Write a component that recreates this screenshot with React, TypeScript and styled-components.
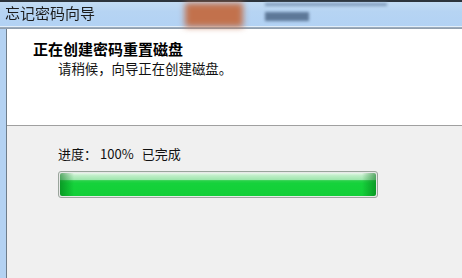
import React from "react";
import styled, { createGlobalStyle } from "styled-components";

const GlobalStyle = createGlobalStyle`
  html, body {
    margin: 0;
    padding: 0;
    overflow: hidden;
    background: #f0f0f0;
  }
`;

const cjk = `"Noto Sans CJK SC", "Microsoft YaHei", "Liberation Sans", sans-serif`;

const Window = styled.div`
  width: 462px;
  height: 278px;
  display: flex;
  flex-direction: column;
  font-family: ${cjk};
  overflow: hidden;
`;

const TopEdge = styled.div`
  height: 2px;
  background: #2c343c;
`;

const TitleBar = styled.div`
  height: 24px;
  display: flex;
  align-items: center;
  background: linear-gradient(to bottom, #c3dcf4 0%, #b6d4f3 40%, #b2d2f4 100%);
  border-bottom: 1px solid #e2eef9;
`;

const TitleText = styled.span`
  font-size: 15px;
  line-height: 15px;
  color: #1c1c1c;
  margin-left: 5px;
  margin-top: -4px;
  width: 180px;
  filter: blur(0.3px);
`;

const GlassBlob = styled.div`
  width: 58px;
  height: 24px;
  margin-top: 1px;
  background: #c2714c;
  filter: blur(3px);
`;

const GlassText = styled.div`
  display: flex;
  flex-direction: column;
  gap: 6px;
  margin-left: 22px;
  margin-top: -4px;
`;

const GlassLine = styled.div<{ $w: number; $c: string; $h: number }>`
  width: ${(p) => p.$w}px;
  height: ${(p) => p.$h}px;
  background: ${(p) => p.$c};
  filter: blur(1.5px);
`;

const FrameRule = styled.div`
  height: 2px;
  background: linear-gradient(to bottom, #9eb0c2, #8d9aa8);
`;

const Body = styled.div`
  flex: 1;
  display: flex;
`;

const SideFrame = styled.div`
  width: 6px;
  background: #b4d2f2;
  border-right: 1px solid #6f7d8a;
`;

const Panel = styled.div`
  flex: 1;
  display: flex;
  flex-direction: column;
`;

const Header = styled.div`
  height: 97px;
  background: #ffffff;
  border-bottom: 1px solid #a0a0a0;
  box-sizing: border-box;
  padding: 11px 0 0 26px;
`;

const Heading = styled.div`
  font-size: 15px;
  line-height: 18px;
  font-weight: bold;
  color: #000;
`;

const Subtitle = styled.div`
  font-size: 13.4px;
  line-height: 18px;
  color: #111;
  margin: 1px 0 0 25px;
`;

const Main = styled.div`
  flex: 1;
  background: #f0f0f0;
  padding: 20px 0 0 51px;
`;

const ProgressLabel = styled.div`
  font-size: 13px;
  line-height: 16px;
  color: #111;
  display: flex;
  gap: 3px;
`;

const Status = styled.span`
  margin-left: 5px;
`;

const Track = styled.div`
  width: 320px;
  height: 27px;
  margin-top: 9px;
  box-sizing: border-box;
  border: 1px solid #9aa59c;
  border-radius: 3px;
  background: #e8e8e8;
  padding: 1px;
`;

const Fill = styled.div`
  height: 100%;
  border-radius: 2px;
  background:
    linear-gradient(
      to right,
      rgba(0, 110, 20, 0.55) 0px,
      rgba(0, 110, 20, 0) 14px,
      rgba(0, 110, 20, 0) calc(100% - 14px),
      rgba(0, 110, 20, 0.55) 100%
    ),
    linear-gradient(
      to bottom,
      #e6f7e9 0%,
      #bdeec6 12%,
      #9ee6ad 30%,
      #2ad24a 33%,
      #15d23b 45%,
      #12cf37 100%
    );
`;

const App = () => {
  const pct = 100;
  return (
    <Window>
      <GlobalStyle />
      <TopEdge />
      <TitleBar>
        <TitleText>忘记密码向导</TitleText>
        <GlassBlob />
        <GlassText>
          <GlassLine $w={122} $h={3} $c="#7f9ab9" />
          <GlassLine $w={44} $h={9} $c="#5d7898" />
        </GlassText>
      </TitleBar>
      <FrameRule />
      <Body>
        <SideFrame />
        <Panel>
          <Header>
            <Heading>正在创建密码重置磁盘</Heading>
            <Subtitle>请稍候，向导正在创建磁盘。</Subtitle>
          </Header>
          <Main>
            <ProgressLabel>
              <span>进度：</span>
              <span>{pct}%</span>
              <Status>已完成</Status>
            </ProgressLabel>
            <Track>
              <Fill style={{ width: `${pct}%` }} />
            </Track>
          </Main>
        </Panel>
      </Body>
    </Window>
  );
};

export default App;
